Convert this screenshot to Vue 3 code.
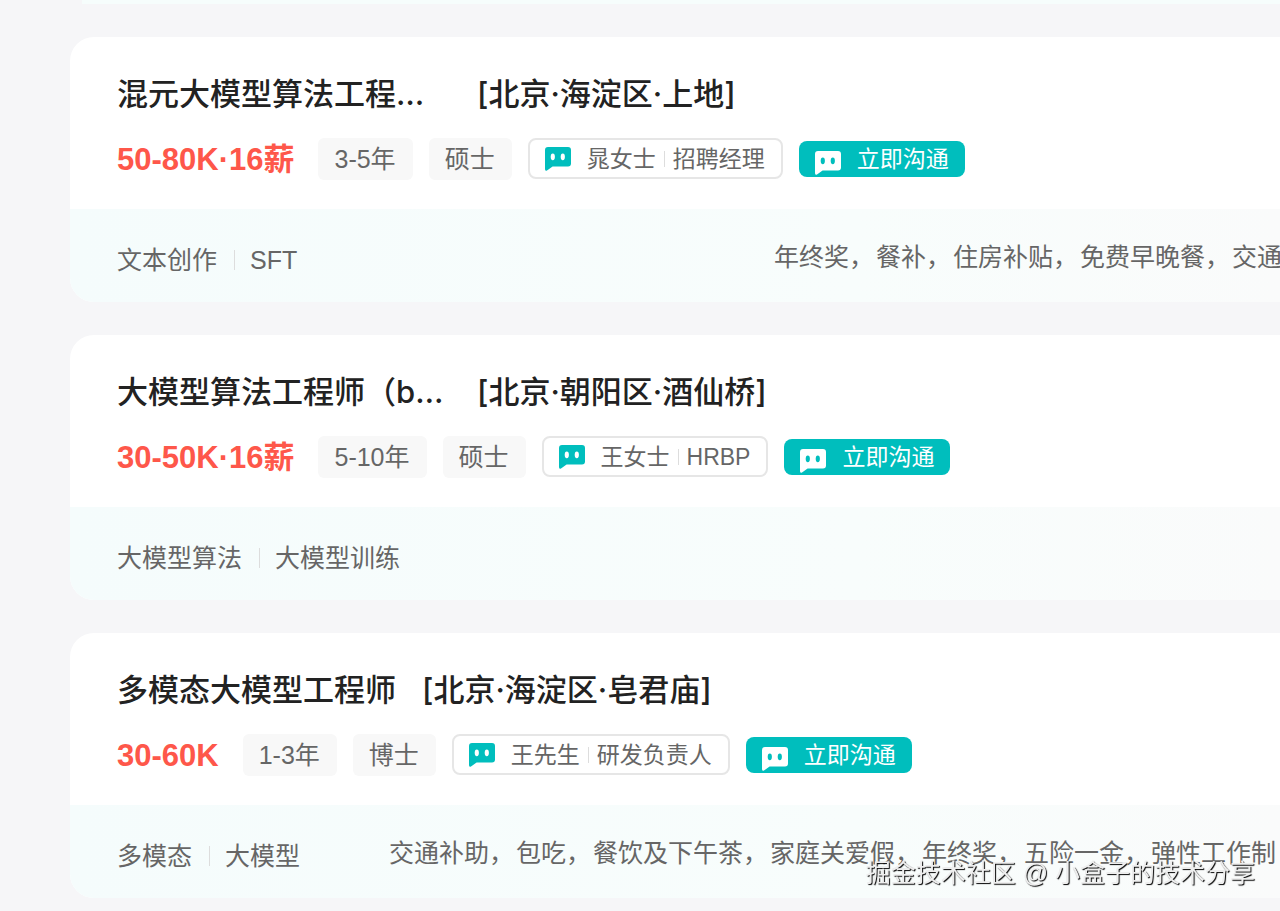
<script setup>
import { ref } from 'vue';

const jobs = ref([
  {
    id: 1,
    title: '混元大模型算法工程…',
    truncated: true,
    area: '[北京·海淀区·上地]',
    salary: '50-80K·16薪',
    tags: ['3-5年', '硕士'],
    recruiter: '晁女士',
    role: '招聘经理',
    skills: ['文本创作', 'SFT'],
    benefits: ['年终奖，', '餐补，', '住房补贴，', '免费早晚餐，', '交通'],
  },
  {
    id: 2,
    title: '大模型算法工程师（b…',
    truncated: true,
    area: '[北京·朝阳区·酒仙桥]',
    salary: '30-50K·16薪',
    tags: ['5-10年', '硕士'],
    recruiter: '王女士',
    role: 'HRBP',
    skills: ['大模型算法', '大模型训练'],
    benefits: [],
  },
  {
    id: 3,
    title: '多模态大模型工程师',
    truncated: false,
    area: '[北京·海淀区·皂君庙]',
    salary: '30-60K',
    tags: ['1-3年', '博士'],
    recruiter: '王先生',
    role: '研发负责人',
    skills: ['多模态', '大模型'],
    benefits: ['交通补助，', '包吃，', '餐饮及下午茶，', '家庭关爱假，', '年终奖，', '五险一金，', '弹性工作制'],
  },
]);
</script>

<template>
  <main class="job-page">
    <div class="previous-card"></div>
    <ul class="job-list">
      <li v-for="job in jobs" :key="job.id" class="job-card">
        <div class="job-body">
          <h2 class="job-heading">
            <span class="job-title" :class="{ truncated: job.truncated }">{{ job.title }}</span>
            <span>{{ job.area }}</span>
          </h2>
          <div class="job-info">
            <span class="salary">{{ job.salary }}</span>
            <div class="info-items">
              <span v-for="tag in job.tags" :key="tag" class="tag">{{ tag }}</span>
              <div class="recruiter">
                <svg class="chat-icon" viewBox="0 0 26 24" aria-hidden="true">
                  <path fill="currentColor" fill-rule="evenodd" d="M3 0h20Q26 0 26 3v13.6q0 3-3 3H7.6L2 23.5Q0 24.6 0 22V3Q0 0 3 0ZM7.8 6.4q-2.1 0-2.1 3.4t2.1 3.4 2.1-3.4-2.1-3.4Zm10 0q-2.1 0-2.1 3.4t2.1 3.4 2.1-3.4-2.1-3.4Z" />
                </svg>
                <span>{{ job.recruiter }}</span>
                <i class="divider"></i>
                <span>{{ job.role }}</span>
              </div>
              <button type="button" class="chat-button">
                <svg class="chat-icon" viewBox="0 0 26 24" aria-hidden="true">
                  <path fill="currentColor" fill-rule="evenodd" d="M3 0h20Q26 0 26 3v13.6q0 3-3 3H7.6L2 23.5Q0 24.6 0 22V3Q0 0 3 0ZM7.8 6.4q-2.1 0-2.1 3.4t2.1 3.4 2.1-3.4-2.1-3.4Zm10 0q-2.1 0-2.1 3.4t2.1 3.4 2.1-3.4-2.1-3.4Z" />
                </svg>
                <span>立即沟通</span>
              </button>
            </div>
          </div>
        </div>
        <div class="job-footer">
          <div class="skills">
            <span v-for="skill in job.skills" :key="skill" class="skill">{{ skill }}</span>
          </div>
          <div v-if="job.benefits.length" class="benefits" :class="{ long: job.benefits.length > 5 }">
            <span v-for="benefit in job.benefits" :key="benefit">{{ benefit }}</span>
          </div>
        </div>
      </li>
    </ul>
    <div class="watermark">掘金技术社区 @ 小盒子的技术分享</div>
  </main>
</template>

<style>
body {
  margin: 0;
  background-color: #f6f6f8;
}
</style>

<style scoped>
.job-page {
  min-height: 100vh;
  box-sizing: border-box;
  padding-left: 70px;
  overflow: hidden;
  background-color: #f6f6f8;
  color: #222;
  font-family: "Liberation Sans", "Noto Sans CJK SC", sans-serif;
}

.previous-card {
  height: 4px;
  margin-bottom: 33px;
  margin-left: 12px;
  background-color: #f6fdfc;
}

.job-list {
  display: flex;
  flex-direction: column;
  gap: 33px;
  margin: 0;
  padding: 0;
  list-style: none;
}

.job-card {
  overflow: hidden;
  border-radius: 24px 0 0 24px;
  background-color: #fff;
  white-space: nowrap;
}

.job-body {
  padding: 36px 0 27px 47px;
}

.job-heading {
  display: flex;
  gap: 26px;
  margin: 0 0 23px;
  font-family: Inter, "Noto Sans CJK SC", sans-serif;
  font-size: 31px;
  font-weight: 500;
  line-height: 42px;
}

.job-title.truncated {
  width: 334px;
}

.job-info {
  display: flex;
  gap: 24px;
}

.salary {
  color: #fe574a;
  font-size: 31px;
  font-weight: 600;
  line-height: 44px;
}

.info-items {
  display: flex;
  align-items: flex-start;
  gap: 16px;
}

.tag {
  padding: 0 17px 0 16px;
  border-radius: 6px;
  background-color: #f8f8f8;
  color: #666;
  font-size: 25px;
  line-height: 42px;
}

.recruiter {
  display: flex;
  align-items: center;
  box-sizing: border-box;
  height: 41px;
  padding: 0 16px 0 15px;
  border: 2px solid #e6e6e6;
  border-radius: 8px;
  color: #666;
  font-size: 23px;
  line-height: 36px;
}

.chat-icon {
  flex: none;
  width: 26px;
  height: 24px;
  margin-right: 16px;
  color: #00bebd;
}

.divider {
  width: 1px;
  height: 16px;
  margin: 0 8px;
  background-color: #ddd;
}

.chat-button {
  display: flex;
  align-items: center;
  height: 36px;
  margin-top: 3px;
  padding: 0 16px;
  border: none;
  border-radius: 8px;
  background-color: #00bebd;
  color: #fff;
  font-family: inherit;
  font-size: 23px;
  line-height: 36px;
  cursor: pointer;
}

.chat-button .chat-icon {
  align-self: flex-end;
  margin-bottom: 2px;
  color: #fff;
}

.job-footer {
  display: flex;
  align-items: flex-start;
  padding: 32px 0 26px 47px;
  background: linear-gradient(90deg, #f5fcfc 0%, #f8fdfc 65%, #fafbfb 100%);
  color: #666;
  font-size: 25px;
  line-height: 32px;
}

.skills {
  display: flex;
  padding-top: 3px;
}

.skill {
  display: flex;
  align-items: center;
}

.skill + .skill::before {
  content: "";
  width: 1px;
  height: 20px;
  margin: 0 15px 0 17px;
  background-color: #ddd;
}

.benefits {
  display: flex;
  flex: 0 0 506px;
  gap: 2px;
  min-width: 0;
  margin-left: auto;
}

.benefits.long {
  flex-basis: 891px;
}

.watermark {
  position: fixed;
  right: 25px;
  bottom: 20px;
  color: #eee;
  font-size: 25px;
  line-height: 36px;
  text-shadow: 1px 1px 1px #000;
  white-space: nowrap;
}
</style>
